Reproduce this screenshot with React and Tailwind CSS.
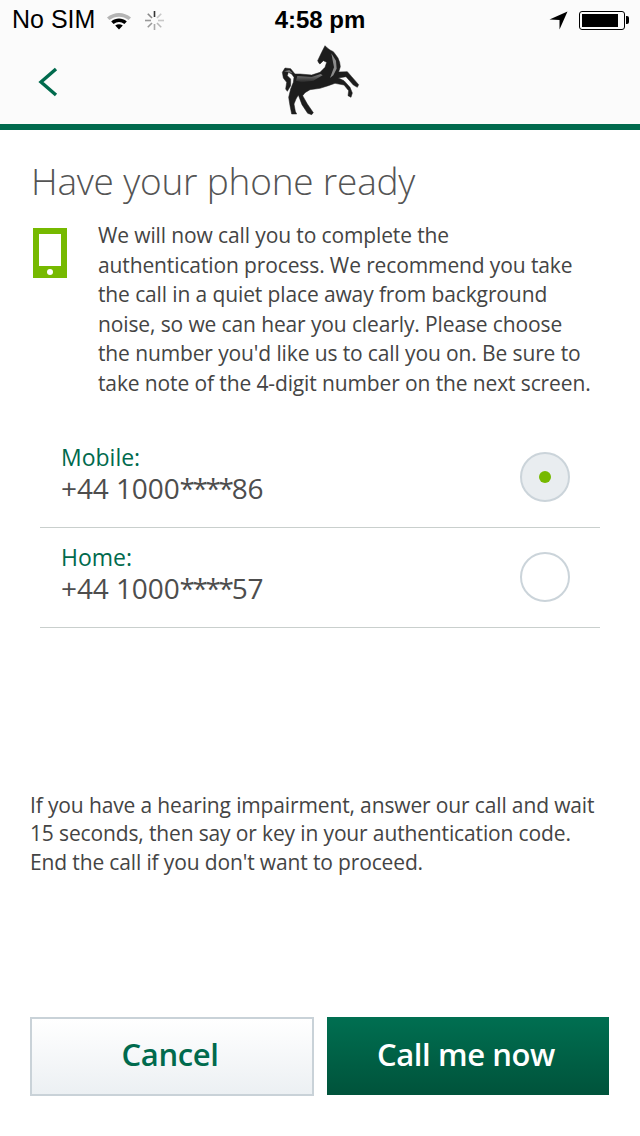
const bodyFont = "font-['Open_Sans','Noto_Sans',sans-serif]";

const phones = [
  { label: "Mobile:", prefix: "+44 1000", suffix: "86", selected: true },
  { label: "Home:", prefix: "+44 1000", suffix: "57", selected: false },
];

const WifiIcon = () => (
  <svg width="26" height="19" viewBox="0 0 26 19">
    <path d="M1 6.5C8 0.5 18 0.5 25 6.5L22.6 9C17 4.5 9 4.5 3.4 9Z" fill="#b4b4b4" />
    <path d="M5.2 10.4C10 6.6 16 6.6 20.8 10.4L18.4 12.9C15 10.2 11 10.2 7.6 12.9Z" fill="#000" />
    <path d="M9.2 14.4C11.5 12.8 14.5 12.8 16.8 14.4L13 18.6Z" fill="#000" />
  </svg>
);

const Spinner = () => {
  const spokes = [0, 45, 90, 135, 180, 225, 270, 315];
  const shades = ["#333", "#c8c8c8", "#c8c8c8", "#b8b8b8", "#aaa", "#999", "#999", "#888"];
  return (
    <svg width="21" height="21" viewBox="0 0 21 21">
      {spokes.map((angle, i) => (
        <rect
          key={angle}
          x="9.7"
          y="1"
          width="1.6"
          height="6"
          fill={shades[i]}
          transform={`rotate(${angle} 10.5 10.5)`}
        />
      ))}
    </svg>
  );
};

const LocationArrow = () => (
  <svg width="19" height="19" viewBox="0 0 19 19">
    <path d="M18.5 0.5 L0.5 8.5 L10.5 9 L10.5 18.5 Z" fill="#000" />
  </svg>
);

const Battery = () => (
  <div className="flex items-center">
    <div className="w-[46px] h-[19px] rounded-[3px] border border-black p-[2px]">
      <div className="h-full w-[36px] bg-black" />
    </div>
    <div className="w-[3px] h-[8px] ml-[1px] bg-black rounded-r-[2px]" />
  </div>
);

const HorseLogo = () => (
  <svg width="80" height="72" viewBox="30 10 240 216" className="mb-[5px]">
    <defs>
      <linearGradient id="sheen" x1="0" y1="0" x2="0" y2="1">
        <stop offset="0" stopColor="#808080" />
        <stop offset="1" stopColor="#242424" />
      </linearGradient>
    </defs>
    <path
      d="M147 68 L143 60 L155 35 L160 25 L165 15 L172 22 L180 28 L190 33 L197 42 L204 52 L209 65 L211 78 L206 94 L232 93 L245 108 L266 132 L262 140 L250 133 L228 108 L205 112 L222 120 L240 140 L247 157 L243 170 L234 165 L236 150 L222 133 L195 128 L175 135 L150 143 L120 147 L105 156 L98 165 L112 190 L130 216 L125 222 L113 218 L96 192 L85 163 L78 175 L72 190 L76 212 L80 220 L65 220 L60 195 L56 170 L62 145 L70 125 L72 110 L65 100 L55 95 L52 105 L62 115 L62 135 L52 152 L47 145 L50 125 L40 112 L37 95 L45 82 L62 84 L75 100 L90 100 L125 103 L150 95 L165 80 L170 65 L160 60 L150 70 Z"
      fill="#1d1d1d"
      stroke="#1d1d1d"
      strokeWidth="1.5"
      strokeLinejoin="round"
    />
    <path d="M82 106 L125 109 L152 100 L158 104 L130 120 L95 125 L78 120Z" fill="url(#sheen)" />
    <path d="M184 38 L198 60 L200 84 L190 104 L180 112 L192 80Z" fill="#8a8a8a" />
    <path d="M42 92 L58 88 L68 98 L52 94Z" fill="#777" />
  </svg>
);

const PhoneIcon = () => (
  <div className="flex flex-col items-center w-[34px] h-[50px] bg-[#76b900] px-[6px] pt-[6px]">
    <div className="w-full h-[32px] bg-white" />
    <div className="w-[6px] h-[6px] mt-[3px] rounded-full bg-white" />
  </div>
);

const PhoneRow = ({ label, prefix, suffix, selected }) => (
  <div className="flex items-center justify-between h-[100px] pl-[21px] pr-[30px] border-b border-[#c9cfcd]">
    <div className="pb-[8px]">
      <div className="text-[23px] leading-[29px] text-[#006a4d]">{label}</div>
      <div className="text-[28px] leading-[32px] tracking-[-0.1px] text-[#4d4d4d]">
        {prefix}
        <span className="tracking-[-2.4px]">****</span>
        {suffix}
      </div>
    </div>
    <div
      className={`flex items-center justify-center w-[50px] h-[50px] rounded-full border-2 border-[#cbd4da] ${
        selected ? "bg-[#e9edf0]" : "bg-white"
      }`}
    >
      {selected && <div className="w-[12px] h-[12px] rounded-full bg-[#76b900]" />}
    </div>
  </div>
);

export default function App() {
  return (
    <div className={`flex flex-col w-[640px] h-[1136px] bg-white ${bodyFont}`}>
      <header className="bg-[#fbfbfb]">
        <div className="relative flex items-center justify-between h-[40px] pl-[12px] pr-[11px] text-black">
          <div className="flex items-center">
            <span className="font-['Liberation_Sans',sans-serif] text-[25px]">No SIM</span>
            <span className="ml-[11px]"><WifiIcon /></span>
            <span className="ml-[12px]"><Spinner /></span>
          </div>
          <span className="absolute left-0 right-0 text-center font-['Liberation_Sans',sans-serif] text-[24px] font-bold">
            4:58 pm
          </span>
          <div className="flex items-center gap-[11px]">
            <LocationArrow />
            <Battery />
          </div>
        </div>
        <div className="relative flex items-center justify-center h-[84px]">
          <svg className="absolute left-[37px] top-[27px]" width="22" height="30" viewBox="0 0 22 30">
            <path d="M19 2 L4 15 L19 28" fill="none" stroke="#006a4d" strokeWidth="3.4" />
          </svg>
          <HorseLogo />
        </div>
        <div className="h-[6px] bg-[#006a4d]" />
      </header>

      <main className="flex flex-col flex-1 pt-[24px]">
        <h1 className="pl-[31px] text-[37px] leading-[54px] tracking-[-0.2px] font-light text-[#545454]">
          Have your phone ready
        </h1>
        <div className="flex mt-[13px] pl-[33px]">
          <div className="pt-[7px]"><PhoneIcon /></div>
          <p className="ml-[31px] whitespace-nowrap text-[21px] leading-[29.6px] tracking-[-0.12px] text-[#444]">
            We will now call you to complete the<br />
            authentication process. We recommend you take<br />
            the call in a quiet place away from background<br />
            noise, so we can hear you clearly. Please choose<br />
            the number you'd like us to call you on. Be sure to<br />
            take note of the 4-digit number on the next screen.
          </p>
        </div>
        <div className="mt-[29px] mx-[40px]">
          {phones.map((p) => (
            <PhoneRow key={p.label} {...p} />
          ))}
        </div>
        <p className="mt-[163px] mx-[30px] text-[21px] leading-[28.7px] tracking-[-0.14px] text-[#444]">
          If you have a hearing impairment, answer our call and wait 15 seconds, then say or key in your authentication code. End the call if you don't want to proceed.
        </p>
        <div className="flex items-start gap-[13px] mt-auto mb-[40px] ml-[30px]">
          <button className="w-[284px] h-[79px] pb-[4px] pr-[4px] border-2 border-[#c9d2d8] bg-gradient-to-b from-white to-[#ecf0f3] text-[31px] tracking-[-0.4px] font-semibold text-[#006a4d]">
            Cancel
          </button>
          <button className="w-[282px] h-[78px] pb-[4px] pr-[4px] bg-gradient-to-b from-[#006f51] to-[#00533b] text-[31px] tracking-[-0.4px] font-semibold text-white">
            Call me now
          </button>
        </div>
      </main>
    </div>
  );
}
